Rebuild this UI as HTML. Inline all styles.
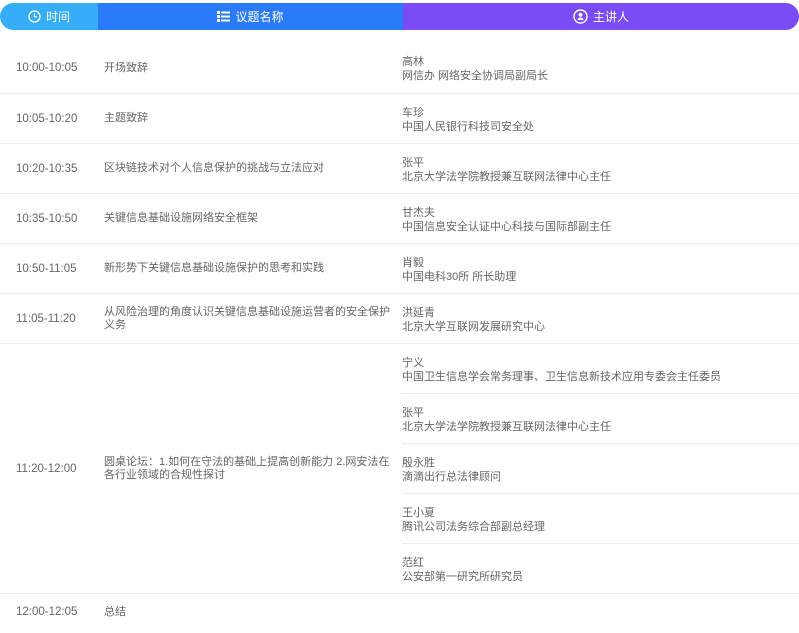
<!DOCTYPE html><html><head><meta charset="utf-8"><style>
body{margin:0;width:799px;height:633px;overflow:hidden;background:#fff;font-family:"Liberation Sans","Noto Sans CJK SC",sans-serif;font-size:11px;color:#666;position:relative}
.h{position:absolute;top:3px;height:27px;color:#fff;font-size:12px;display:flex;align-items:center;justify-content:center;gap:5px}
.r{position:absolute;left:0;width:799px;border-bottom:1px solid #ececec}
.s{position:absolute;left:402px;width:397px;border-bottom:1px solid #ececec}
.t{position:absolute;left:16px;display:flex;align-items:center;font-size:11.5px}
.p{position:absolute;left:104px;width:295px;display:flex;align-items:center;line-height:13px}
.k{position:absolute;left:0;display:flex;flex-direction:column;justify-content:center;line-height:14px;height:100%;padding-top:2px;box-sizing:border-box}
</style></head><body>
<div class="h" style="left:0;width:98px;background:#35adf9;border-radius:14px 0 0 14px"><svg width="13" height="13"><circle cx="6.5" cy="6.5" r="5.5" fill="none" stroke="#fff" stroke-width="1.3"/><path d="M6.5 3.5V6.8H9" fill="none" stroke="#fff" stroke-width="1.2"/></svg>时间</div>
<div class="h" style="left:98px;width:305px;background:#2a7bf8"><svg width="13" height="11"><rect x="0" y="0" width="3" height="3" fill="#fff"/><rect x="0" y="4" width="3" height="3" fill="#fff"/><rect x="0" y="8" width="3" height="3" fill="#fff"/><rect x="4" y="0.5" width="9" height="2" fill="#fff"/><rect x="4" y="4.5" width="9" height="2" fill="#fff"/><rect x="4" y="8.5" width="9" height="2" fill="#fff"/></svg>议题名称</div>
<div class="h" style="left:403px;width:396px;background:#7a4cf6;border-radius:0 14px 14px 0"><svg width="15" height="15"><circle cx="7.5" cy="7.5" r="6.5" fill="none" stroke="#fff" stroke-width="1.4"/><circle cx="7.5" cy="5.8" r="2" fill="#fff"/><path d="M4.5 11a3 2.5 0 0 1 6 0z" fill="#fff"/></svg>主讲人</div>

<div class="r" style="top:43px;height:50px"><div class="t" style="height:50px">10:00-10:05</div><div class="p" style="height:50px">开场致辞</div><div class="k" style="left:402px">高林<br>网信办 网络安全协调局副局长</div></div>
<div class="r" style="top:94px;height:49px"><div class="t" style="height:49px">10:05-10:20</div><div class="p" style="height:49px">主题致辞</div><div class="k" style="left:402px">车珍<br>中国人民银行科技司安全处</div></div>
<div class="r" style="top:144px;height:49px"><div class="t" style="height:49px">10:20-10:35</div><div class="p" style="height:49px">区块链技术对个人信息保护的挑战与立法应对</div><div class="k" style="left:402px">张平<br>北京大学法学院教授兼互联网法律中心主任</div></div>
<div class="r" style="top:194px;height:49px"><div class="t" style="height:49px">10:35-10:50</div><div class="p" style="height:49px">关键信息基础设施网络安全框架</div><div class="k" style="left:402px">甘杰夫<br>中国信息安全认证中心科技与国际部副主任</div></div>
<div class="r" style="top:244px;height:49px"><div class="t" style="height:49px">10:50-11:05</div><div class="p" style="height:49px">新形势下关键信息基础设施保护的思考和实践</div><div class="k" style="left:402px">肖毅<br>中国电科30所 所长助理</div></div>
<div class="r" style="top:294px;height:49px"><div class="t" style="height:49px">11:05-11:20</div><div class="p" style="height:49px">从风险治理的角度认识关键信息基础设施运营者的安全保护义务</div><div class="k" style="left:402px">洪延青<br>北京大学互联网发展研究中心</div></div>
<div class="r" style="top:344px;height:249px"><div class="t" style="height:249px">11:20-12:00</div><div class="p" style="height:249px">圆桌论坛：1.如何在守法的基础上提高创新能力 2.网安法在各行业领域的合规性探讨</div></div>
<div class="s" style="top:344px;height:49px"><div class="k">宁义<br>中国卫生信息学会常务理事、卫生信息新技术应用专委会主任委员</div></div>
<div class="s" style="top:394px;height:49px"><div class="k">张平<br>北京大学法学院教授兼互联网法律中心主任</div></div>
<div class="s" style="top:444px;height:49px"><div class="k">殷永胜<br>滴滴出行总法律顾问</div></div>
<div class="s" style="top:494px;height:49px"><div class="k">王小夏<br>腾讯公司法务综合部副总经理</div></div>
<div class="s" style="top:544px;height:49px;border-bottom:none"><div class="k">范红<br>公安部第一研究所研究员</div></div>
<div class="r" style="top:594px;height:36px;border-bottom:none"><div class="t" style="height:36px">12:00-12:05</div><div class="p" style="height:36px">总结</div></div>
</body></html>
